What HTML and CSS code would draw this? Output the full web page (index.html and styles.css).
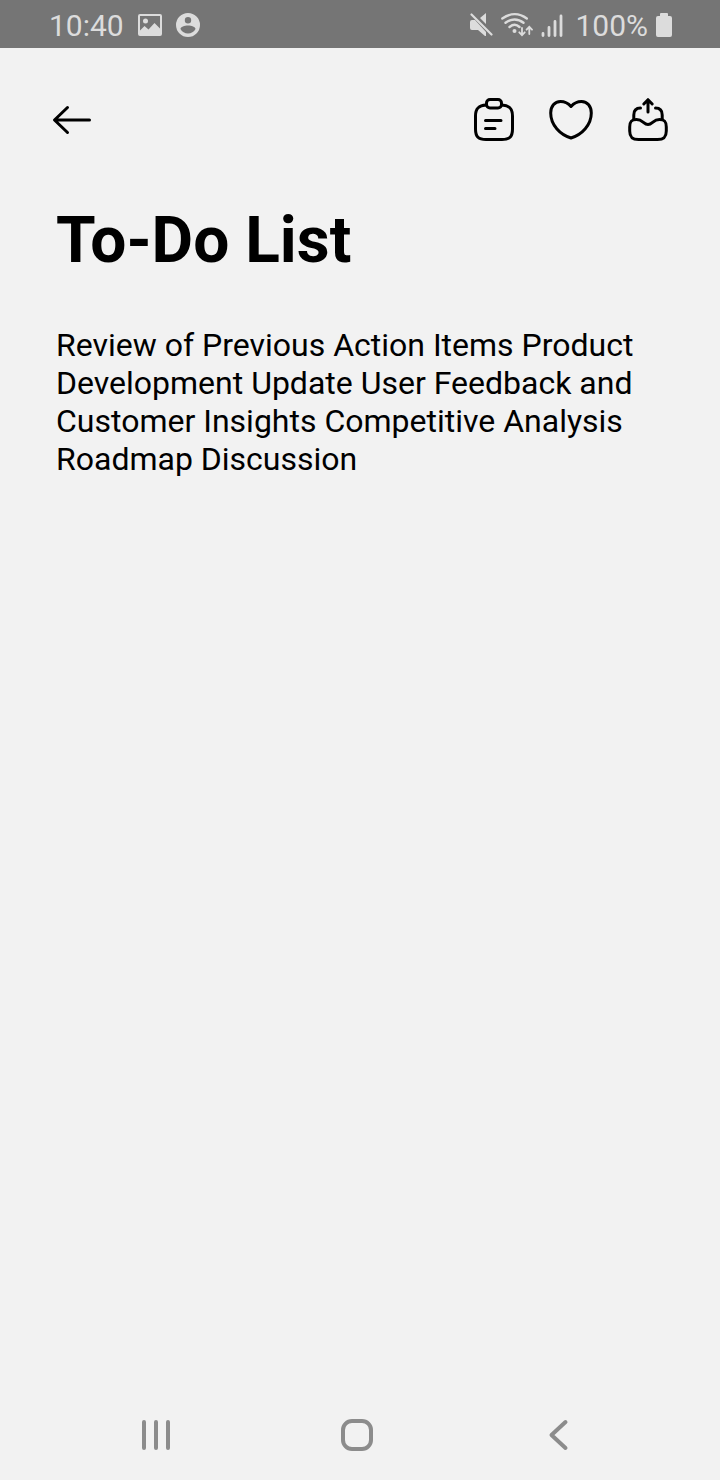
FILE: index.html
```html
<!DOCTYPE html>
<html lang="en">
<head>
<meta charset="utf-8">
<meta name="viewport" content="width=device-width, initial-scale=1">
<title>To-Do List</title>
<link rel="stylesheet" href="styles.css">
</head>
<body>
<div class="status-bar">
  <div class="status-group">
    <span class="status-text">10:40</span>
    <svg class="status-icon" width="24" height="24" viewBox="0 0 24 24" aria-hidden="true">
      <path fill-rule="evenodd" d="M2 1h20a2 2 0 0 1 2 2v18a2 2 0 0 1-2 2H2a2 2 0 0 1-2-2V3a2 2 0 0 1 2-2zm0 2v14.500l4.500-4.500 4 3.500 6-6.500 5.500 5.500V3zM7.500 5.500a2.500 2.500 0 1 1 0 5 2.500 2.500 0 0 1 0-5z"/>
    </svg>
    <svg class="status-icon" width="24" height="24" viewBox="0 0 24 24" aria-hidden="true">
      <path fill-rule="evenodd" d="M12 0a12 12 0 1 1 0 24 12 12 0 0 1 0-24zm0 4a3.200 3.200 0 1 0 0 6.400A3.200 3.200 0 0 0 12 4zm0 8.500c-3.500 0-7.500 1.300-7.500 3.500 1.500 2.800 4.300 4.500 7.500 4.500s6-1.700 7.500-4.500c0-2.200-4-3.500-7.500-3.500z"/>
    </svg>
  </div>
  <div class="status-group status-group-right">
    <svg class="status-icon" width="24" height="26" viewBox="469 12 24 26" aria-hidden="true">
      <path d="M472 20h3l11 12v4h-1l-7-6h-6a2 2 0 0 1-2-2v-6a2 2 0 0 1 2-2zM480 18l6-5v11z"/>
      <path class="line" stroke-width="2.200" d="M471.500 14.500l20 20"/>
    </svg>
    <svg class="status-icon" width="32" height="26" viewBox="501 12 32 26" aria-hidden="true">
      <g class="line" stroke-width="2.400">
        <path d="M502.300 18.500c8-5.700 17-5.700 24.500 0M505.500 22.800c5.500-4.500 12.500-4.500 18 0M509.500 27c3.500-2.800 7-2.800 10 0"/>
        <path stroke-width="1.800" d="M522 28v7m-2.700-2.700l2.700 2.800 2.700-2.800M529.300 34v-7m-2.700 2.700l2.700-2.800 2.700 2.800"/>
      </g>
      <circle cx="514.500" cy="31" r="2"/>
    </svg>
    <svg class="status-icon" width="24" height="26" viewBox="541 12 24 26" aria-hidden="true">
      <path class="line" stroke-width="2.800" d="M543 33.500v2M549 27.500v8M555 21.500v14M561 16v19.500"/>
    </svg>
    <span class="status-text status-battery">100%</span>
    <svg class="status-icon" width="16" height="24" viewBox="0 0 16 24" aria-hidden="true">
      <path d="M5 0h6a1 1 0 0 1 1 1v2h2a2 2 0 0 1 2 2v17a2 2 0 0 1-2 2H2a2 2 0 0 1-2-2V5a2 2 0 0 1 2-2h2V1a1 1 0 0 1 1-1z"/>
    </svg>
  </div>
</div>

<header class="toolbar">
  <button class="icon-button" type="button" aria-label="Back">
    <svg width="48" height="48" viewBox="0 0 48 48"><path d="M19.500 11.500L6.500 24l13 12.500M7 24h34.500"/></svg>
  </button>
  <div class="toolbar-actions">
    <button class="icon-button" type="button" aria-label="Copy to clipboard">
      <svg width="48" height="48" viewBox="0 0 48 48">
        <path d="M16 9c-7 .3-10.500 3-10.500 11v13c0 8 3 10.500 10.500 10.500h16c7.500 0 10.500-2.500 10.500-10.500V20c0-8-3.500-10.700-10.500-11"/>
        <rect x="16.500" y="3.500" width="15" height="8.500" rx="3.500"/>
        <path d="M15.500 24.500h15.500M15.500 32.500h9.500"/>
      </svg>
    </button>
    <button class="icon-button" type="button" aria-label="Favorite">
      <svg width="48" height="48" viewBox="0 0 48 48"><path d="M24 10.500C20.500 6.500 17.500 5.500 13.500 5.500 7.500 5.500 3.700 10.500 3.700 17 3.700 29 13 38.500 24 42 35 38.500 44.300 29 44.300 17 44.300 10.500 40.500 5.500 34.500 5.500 30.500 5.500 27.500 6.500 24 10.500z"/></svg>
    </button>
    <button class="icon-button" type="button" aria-label="Share">
      <svg width="48" height="48" viewBox="0 0 48 48">
        <path d="M24 16V3.700M19.800 8L24 3.700 28.200 8"/>
        <path d="M16.500 12c-4.500 0-6.700 2.500-6.700 7v4.500M31.500 12c4.500 0 6.700 2.500 6.700 7v4.500"/>
        <path d="M5.700 31c0-5 1.300-7.500 6.800-7.500 6.500 0 7 5 11.500 5s5-5 11.500-5c5.500 0 6.800 2.500 6.800 7.500v4c0 6-2.300 8.500-8.800 8.500h-19c-6.500 0-8.800-2.500-8.800-8.500z"/>
      </svg>
    </button>
  </div>
</header>

<main class="note">
  <h1 class="note-title">To-Do List</h1>
  <p class="note-body">Review of Previous Action Items Product Development Update User Feedback and Customer Insights Competitive Analysis Roadmap Discussion</p>
</main>

<nav class="system-nav" aria-label="System">
  <button class="nav-button" type="button" aria-label="Recent apps">
    <svg width="40" height="40" viewBox="0 0 40 40"><path d="M8 7v26M20 7v26M32 7v26"/></svg>
  </button>
  <button class="nav-button" type="button" aria-label="Home">
    <svg width="40" height="40" viewBox="0 0 40 40"><rect x="6" y="6" width="28" height="28" rx="9"/></svg>
  </button>
  <button class="nav-button" type="button" aria-label="Back">
    <svg width="40" height="40" viewBox="0 0 40 40"><path d="M27.500 7L13.500 20l14 13"/></svg>
  </button>
</nav>
</body>
</html>
```

FILE: styles.css
```css
* {
  box-sizing: border-box;
}

body {
  display: flex;
  flex-direction: column;
  min-height: 100vh;
  margin: 0;
  background: #f2f2f2;
  color: #000;
  font-family: Roboto, sans-serif;
}

svg {
  display: block;
}

button {
  padding: 0;
  border: 0;
  background: none;
  color: inherit;
  cursor: pointer;
}

.status-bar {
  display: flex;
  align-items: center;
  justify-content: space-between;
  height: 48px;
  padding: 2px 48px 0 49px;
  background: #757575;
  color: #dcdcdc;
}

.status-group {
  display: flex;
  align-items: center;
  gap: 14px;
}

.status-group-right {
  gap: 8px;
}

.status-text {
  padding-top: 2px;
  font-size: 30px;
  line-height: 36px;
}

.status-battery {
  padding-left: 2px;
}

.status-icon {
  fill: currentColor;
}

.line {
  fill: none;
  stroke: currentColor;
  stroke-linecap: round;
}

.toolbar {
  display: flex;
  align-items: center;
  justify-content: space-between;
  height: 144px;
  padding: 0 48px;
}

.toolbar-actions {
  display: flex;
  gap: 29px;
}

.icon-button svg,
.nav-button svg {
  fill: none;
  stroke: currentColor;
  stroke-width: 3;
  stroke-linecap: round;
  stroke-linejoin: round;
}

.note {
  flex: 1;
  padding: 10px 56px;
}

.note-title {
  margin: 0 0 46px;
  font-size: 64px;
  font-weight: 700;
  line-height: 78px;
}

.note-body {
  margin: 0;
  font-size: 32px;
  line-height: 38px;
}

.system-nav {
  display: flex;
  align-items: center;
  justify-content: space-between;
  height: 90px;
  padding: 0 142px 0 136px;
  color: #8c8c8c;
}

.nav-button svg {
  stroke-width: 4;
}
```
